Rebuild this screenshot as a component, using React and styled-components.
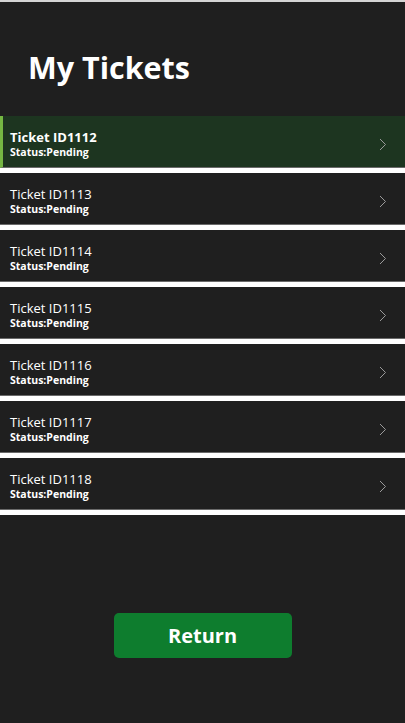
import React from "react";
import styled, { createGlobalStyle } from "styled-components";

const Global = createGlobalStyle`
  html, body { margin: 0; padding: 0; background: #1f1f1f; }
  * { box-sizing: border-box; }
`;

const Page = styled.div`
  width: 405px;
  min-height: 723px;
  background: #1f1f1f;
  border-top: 2px solid #d4d4d4;
  font-family: "Open Sans", "Noto Sans", sans-serif;
  color: #fff;
  display: flex;
  flex-direction: column;
`;

const Header = styled.header`
  padding: 44px 0 28px 28px;
`;

const Title = styled.h1`
  margin: 0;
  font-size: 30.5px;
  line-height: 42px;
  font-weight: 700;
  color: #fff;
`;

const List = styled.div`
  display: flex;
  flex-direction: column;
`;

const Row = styled.div`
  height: 52px;
  display: flex;
  align-items: center;
  justify-content: space-between;
  padding: 0 18px 0 ${(p) => (p.$active ? "7px" : "10px")};
  background: ${(p) => (p.$active ? "#1d3520" : "#1f1f1f")};
  border-left: ${(p) => (p.$active ? "3px solid #75b743" : "none")};
  border-bottom: 1px solid #6a6a6a;
  box-shadow: 0 5px 0 #ffffff;
  margin-bottom: 5px;
`;

const Info = styled.div`
  display: flex;
  flex-direction: column;
  margin-top: 4px;
`;

const TicketId = styled.div`
  font-size: 13px;
  line-height: 17px;
  font-weight: ${(p) => (p.$active ? 700 : 400)};
  color: #fff;
`;

const Status = styled.div`
  font-size: 10.5px;
  line-height: 13px;
  font-weight: 700;
  color: #fff;
`;

const Chevron = styled.svg`
  width: 8px;
  height: 13px;
  margin-top: 5px;
`;

const Footer = styled.div`
  display: flex;
  justify-content: center;
  padding-top: 98px;
`;

const Button = styled.button`
  width: 178px;
  height: 45px;
  border: none;
  border-radius: 5px;
  background: #0e7d2e;
  color: #fff;
  font-family: "Open Sans", "Noto Sans", sans-serif;
  font-size: 20px;
  font-weight: 700;
  cursor: pointer;
`;

const tickets = ["1112", "1113", "1114", "1115", "1116", "1117", "1118"];

export default function App() {
  return (
    <>
      <Global />
      <Page>
        <Header>
          <Title>My Tickets</Title>
        </Header>
        <List>
          {tickets.map((id, i) => (
            <Row key={id} $active={i === 0}>
              <Info>
                <TicketId $active={i === 0}>Ticket ID{id}</TicketId>
                <Status>Status:Pending</Status>
              </Info>
              <Chevron viewBox="0 0 8 13">
                <path d="M1 1 L6.5 6.5 L1 12" fill="none" stroke="#9a9a9a" strokeWidth="1" />
              </Chevron>
            </Row>
          ))}
        </List>
        <Footer>
          <Button>Return</Button>
        </Footer>
      </Page>
    </>
  );
}
